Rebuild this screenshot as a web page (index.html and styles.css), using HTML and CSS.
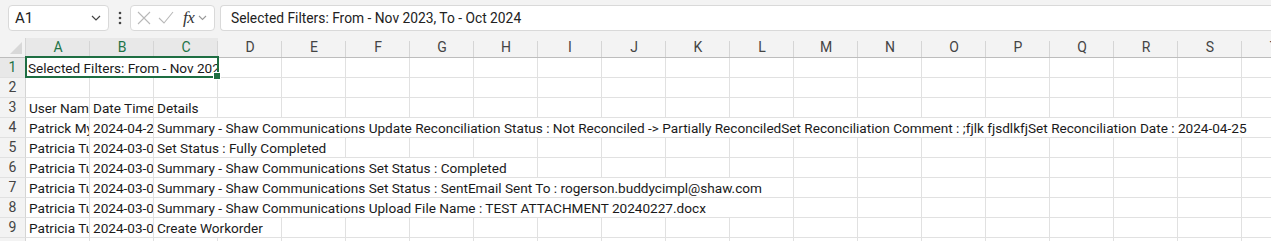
FILE: index.html
```html
<!DOCTYPE html>
<html>
<head>
<meta charset="utf-8">
<link rel="stylesheet" href="styles.css">
</head>
<body>
<div class="app">
  <div class="toolbar">
    <div class="namebox">
      <span class="ref">A1</span>
      <svg class="chev" width="10" height="6" viewBox="0 0 10 6"><polyline points="1,1 5,5 9,1" fill="none" stroke="#444" stroke-width="1.2"/></svg>
    </div>
    <div class="kebab">
      <svg width="4" height="14" viewBox="0 0 4 14"><circle cx="2" cy="2" r="1.3" fill="#444"/><circle cx="2" cy="7" r="1.3" fill="#444"/><circle cx="2" cy="12" r="1.3" fill="#444"/></svg>
    </div>
    <div class="fnbox">
      <svg class="ico" width="14" height="14" viewBox="0 0 14 14"><path d="M1 1 L13 13 M13 1 L1 13" stroke="#b8b8b8" stroke-width="1.1" fill="none"/></svg>
      <svg class="ico" width="16" height="14" viewBox="0 0 16 14"><polyline points="1,7 6,12 15,1" stroke="#b8b8b8" stroke-width="1.1" fill="none"/></svg>
      <span class="fx">fx</span>
      <svg class="chev2" width="9" height="6" viewBox="0 0 9 6"><polyline points="1,1 4.5,4.5 8,1" fill="none" stroke="#999" stroke-width="1.1"/></svg>
    </div>
    <div class="formula">Selected Filters: From - Nov 2023, To - Oct 2024</div>
  </div>

  <div class="sheet">
    <div class="corner"><span class="tri"></span></div>
    <div class="ch sel">A</div><div class="ch sel">B</div><div class="ch sel">C</div><div class="ch">D</div><div class="ch">E</div><div class="ch">F</div><div class="ch">G</div><div class="ch">H</div><div class="ch">I</div><div class="ch">J</div><div class="ch">K</div><div class="ch">L</div><div class="ch">M</div><div class="ch">N</div><div class="ch">O</div><div class="ch">P</div><div class="ch">Q</div><div class="ch">R</div><div class="ch">S</div><div class="ch">T</div>

    <div class="rh sel">1</div>
    <div class="c s3 active"><span class="clip">Selected Filters: From - Nov 2023, To - Oct 2024</span></div>
    <div class="c"></div><div class="c"></div><div class="c"></div><div class="c"></div><div class="c"></div><div class="c"></div><div class="c"></div><div class="c"></div><div class="c"></div><div class="c"></div><div class="c"></div><div class="c"></div><div class="c"></div><div class="c"></div><div class="c"></div><div class="c"></div><div class="c"></div>

    <div class="rh">2</div>
    <div class="c"></div><div class="c"></div><div class="c"></div><div class="c"></div><div class="c"></div><div class="c"></div><div class="c"></div><div class="c"></div><div class="c"></div><div class="c"></div><div class="c"></div><div class="c"></div><div class="c"></div><div class="c"></div><div class="c"></div><div class="c"></div><div class="c"></div><div class="c"></div><div class="c"></div><div class="c"></div>

    <div class="rh">3</div>
    <div class="c">User Name</div><div class="c">Date Time</div><div class="c">Details</div>
    <div class="c"></div><div class="c"></div><div class="c"></div><div class="c"></div><div class="c"></div><div class="c"></div><div class="c"></div><div class="c"></div><div class="c"></div><div class="c"></div><div class="c"></div><div class="c"></div><div class="c"></div><div class="c"></div><div class="c"></div><div class="c"></div><div class="c"></div>

    <div class="rh">4</div>
    <div class="c">Patrick My</div><div class="c">2024-04-25</div>
    <div class="c s18">Summary - Shaw Communications Update Reconciliation Status : Not Reconciled -&gt; Partially ReconciledSet Reconciliation Comment : ;fjlk fjsdlkfjSet Reconciliation Date : 2024-04-25</div>

    <div class="rh">5</div>
    <div class="c">Patricia Tu</div><div class="c">2024-03-07</div>
    <div class="c s3">Set Status : Fully Completed</div>
    <div class="c"></div><div class="c"></div><div class="c"></div><div class="c"></div><div class="c"></div><div class="c"></div><div class="c"></div><div class="c"></div><div class="c"></div><div class="c"></div><div class="c"></div><div class="c"></div><div class="c"></div><div class="c"></div><div class="c"></div>

    <div class="rh">6</div>
    <div class="c">Patricia Tu</div><div class="c">2024-03-07</div>
    <div class="c s6">Summary - Shaw Communications Set Status : Completed</div>
    <div class="c"></div><div class="c"></div><div class="c"></div><div class="c"></div><div class="c"></div><div class="c"></div><div class="c"></div><div class="c"></div><div class="c"></div><div class="c"></div><div class="c"></div><div class="c"></div>

    <div class="rh">7</div>
    <div class="c">Patricia Tu</div><div class="c">2024-03-07</div>
    <div class="c s10">Summary - Shaw Communications Set Status : SentEmail Sent To : rogerson.buddycimpl@shaw.com</div>
    <div class="c"></div><div class="c"></div><div class="c"></div><div class="c"></div><div class="c"></div><div class="c"></div><div class="c"></div><div class="c"></div>

    <div class="rh">8</div>
    <div class="c">Patricia Tu</div><div class="c">2024-03-07</div>
    <div class="c s10">Summary - Shaw Communications Upload File Name : TEST ATTACHMENT 20240227.docx</div>
    <div class="c"></div><div class="c"></div><div class="c"></div><div class="c"></div><div class="c"></div><div class="c"></div><div class="c"></div><div class="c"></div>

    <div class="rh">9</div>
    <div class="c">Patricia Tu</div><div class="c">2024-03-07</div>
    <div class="c s2">Create Workorder</div>
    <div class="c"></div><div class="c"></div><div class="c"></div><div class="c"></div><div class="c"></div><div class="c"></div><div class="c"></div><div class="c"></div><div class="c"></div><div class="c"></div><div class="c"></div><div class="c"></div><div class="c"></div><div class="c"></div><div class="c"></div><div class="c"></div>

    <div class="rh">10</div>
    <div class="c"></div><div class="c"></div><div class="c"></div><div class="c"></div><div class="c"></div><div class="c"></div><div class="c"></div><div class="c"></div><div class="c"></div><div class="c"></div><div class="c"></div><div class="c"></div><div class="c"></div><div class="c"></div><div class="c"></div><div class="c"></div><div class="c"></div><div class="c"></div><div class="c"></div><div class="c"></div>
  </div>
</div>
</body>
</html>
```

FILE: styles.css
```css
* { box-sizing: border-box; }
html, body { margin: 0; padding: 0; background: #fff; }
body { width: 1271px; height: 241px; overflow: hidden; font-family: Roboto, "Liberation Sans", sans-serif; color: #1a1a1a; }
.app { width: 1271px; height: 241px; overflow: hidden; }

.toolbar {
  height: 38px;
  background: #f3f3f3;
  display: flex;
  align-items: flex-start;
  padding: 5px 0 0 8px;
}
.namebox {
  width: 101px; height: 26px;
  background: #fff;
  border: 1px solid #d9d9d9;
  border-radius: 4px;
  display: flex; align-items: center; justify-content: space-between;
  padding: 0 7px 0 6px;
  font-size: 15px;
}
.ref { color: #222; }
.kebab { width: 21px; height: 26px; display: flex; align-items: center; justify-content: center; }
.fnbox {
  width: 85px; height: 26px;
  background: #fff;
  border: 1px solid #d9d9d9;
  border-radius: 4px;
  display: flex; align-items: center;
  padding: 0 0 0 6px;
}
.fnbox .ico { margin-right: 7px; }
.fnbox .ico + .ico { margin-right: 9px; }
.fx { font-family: "Liberation Serif", serif; font-style: italic; font-size: 17px; color: #333; margin-right: 4px; letter-spacing: -0.5px; }
.formula {
  flex: 1;
  margin-left: 5px;
  height: 26px;
  background: #fff;
  border: 1px solid #d9d9d9;
  border-right: none;
  border-radius: 4px 0 0 4px;
  padding: 0 0 0 10px;
  font-size: 13.8px;
  line-height: 24px;
  color: #222;
  white-space: nowrap;
}

.sheet {
  display: grid;
  grid-template-columns: 26px repeat(20, 64px);
  grid-template-rows: 20px;
  grid-auto-rows: 20px;
  width: 1306px;
}
.corner {
  background: #f3f3f3;
  border-right: 1px solid #d5d5d5;
  border-bottom: 1px solid #bdbdbd;
  display: flex; align-items: flex-end; justify-content: flex-end;
  padding: 0 3px 3px 0;
}
.tri {
  width: 0; height: 0;
  border-left: 12px solid transparent;
  border-bottom: 12px solid #d8d8d8;
}
.ch {
  background: #f3f3f3 linear-gradient(#d5d5d5, #d5d5d5) right bottom / 1px 16px no-repeat;
  border-bottom: 1px solid #bdbdbd;
  text-align: center;
  font-size: 14px;
  line-height: 19px;
  color: #444;
}
.ch.sel { background-color: #e8e8e8; color: #217346; }
.rh {
  background: #f3f3f3;
  border-right: 1px solid #d5d5d5;
  border-bottom: 1px solid #e1e1e1;
  text-align: center;
  font-size: 14px;
  line-height: 19px;
  color: #444;
}
.rh.sel { background: #e8e8e8; color: #217346; }
.c {
  border-right: 1px solid #e1e1e1;
  border-bottom: 1px solid #e1e1e1;
  font-size: 13.6px;
  line-height: 17px;
  padding: 2px 0 0 3px;
  white-space: nowrap;
  overflow: hidden;
  min-width: 0;
}
.s2 { grid-column: span 2; }
.s3 { grid-column: span 3; }
.s6 { grid-column: span 6; }
.s10 { grid-column: span 10; }
.s18 { grid-column: span 18; }
.active { position: relative; overflow: visible; padding-left: 2px; }
.active .clip { display: block; overflow: hidden; }
.active::after {
  content: "";
  position: absolute;
  left: -1px; top: -2px; right: -2px; bottom: -1px;
  border: 2px solid #1e6e42;
  pointer-events: none;
}
.active::before {
  content: "";
  position: absolute;
  right: -4px; bottom: -3px;
  width: 6px; height: 6px;
  background: #1e6e42;
  border: 1px solid #fff;
  z-index: 2;
}
```
